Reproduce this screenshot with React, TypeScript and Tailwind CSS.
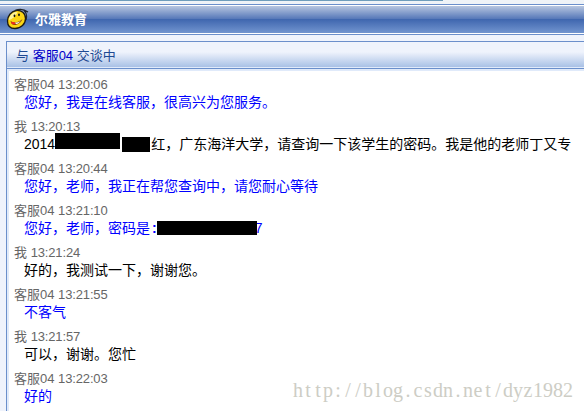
import React from "react";

interface Message {
  sender: string;
  time: string;
  mine?: boolean;
  content: React.ReactNode;
}

const messages: Message[] = [
  { sender: "客服04", time: "13:20:06", content: "您好，我是在线客服，很高兴为您服务。" },
  {
    sender: "我",
    time: "13:20:13",
    mine: true,
    content: (
      <>
        2014
        <span className="inline-block w-[65px] h-4 mt-[-2px] bg-black align-top" />
        <span className="inline-block w-7 h-[15px] mt-[2px] ml-[2px] mr-px bg-black align-top" />
        红，广东海洋大学，请查询一下该学生的密码。我是他的老师丁又专
      </>
    ),
  },
  { sender: "客服04", time: "13:20:44", content: "您好，老师，我正在帮您查询中，请您耐心等待" },
  {
    sender: "客服04",
    time: "13:21:10",
    content: (
      <>
        您好，老师，密码是<span className="ml-[2px] font-bold">:</span>
        <span className="relative inline-block w-[100px] h-[14px] mt-[2px] mr-[-2px] bg-black align-top" />
        7
      </>
    ),
  },
  { sender: "我", time: "13:21:24", mine: true, content: "好的，我测试一下，谢谢您。" },
  { sender: "客服04", time: "13:21:55", content: "不客气" },
  { sender: "我", time: "13:21:57", mine: true, content: "可以，谢谢。您忙" },
  { sender: "客服04", time: "13:22:03", content: "好的" },
];

const watermark = "http://blog.csdn.net/dyz1982";

const SmileyIcon: React.FC<{}> = () => (
  <svg width="24" height="23" viewBox="0 0 24 23" className="shrink-0">
    <path d="M10 2.500C5 3.500 1.500 8 1.500 13c0 5 3 7.500 7.500 7.500 6 0 10.500-4.500 10.500-10C19.500 5 15.500 2 10 2.500z" fill="#fcd514" stroke="#1c1a14" strokeWidth="1.300" />
    <path d="M9.500 4C5.500 5 3 8.500 2.800 12c3-.5 7-4 8.700-7.800z" fill="#fff59a" />
    <path d="M9 2.500C13 .8 18 1 22 4l-3.500-1C20.500 5 21 8.500 20 12" fill="none" stroke="#22252c" strokeWidth="1.200" />
    <ellipse cx="8.500" cy="7.800" rx=".9" ry="1.400" fill="#111" />
    <ellipse cx="13" cy="6.800" rx=".9" ry="1.400" fill="#111" />
    <path d="M4.500 13c3.500 2.500 8 1.500 12-2-1.500 3.500-4.500 6-8 6-2 0-3.500-1.500-4-4z" fill="#8a4a08" />
    <path d="M5 14.500c1.500-.8 3.500-.5 4.500 1-1.500 1.500-3.800 1-4.500-1z" fill="#f02a20" />
    <path d="M9 14.800c2.500 0 4.500-1 6-2.300-1.300 2-3 3.300-5 3.600z" fill="#fff" />
  </svg>
);

const App: React.FC<{}> = () => {
  return (
    <div className="w-[584px] h-[411px] overflow-hidden flex flex-col bg-[#eff3fc] font-['Liberation_Sans','Noto_Sans_CJK_SC',sans-serif]">
      <div className="h-1 shrink-0 bg-[#eff3f7]">
        <div className="w-[443px] h-px bg-[#6f9dbb]" />
      </div>
      <header className="h-[31px] shrink-0 border-y border-[#6b8fcb] bg-white py-px">
        <div className="h-[27px] flex items-center pl-[6px] bg-[linear-gradient(to_bottom,#b7c6e0_0,#5577b8_13px,#3e65ae_13px,#7295cf_27px)]">
          <SmileyIcon />
          <h1 className="ml-[5px] text-[13px] leading-4 font-bold text-white whitespace-nowrap">
            尔雅教育
          </h1>
        </div>
      </header>
      <main className="mt-[6px] ml-[6px] flex-1 flex flex-col border-t border-l border-[#6b8fcb] bg-[#e0eafa]">
        <div className="h-[27px] shrink-0 pl-[9px] border-b border-[#6b8fcb] bg-[linear-gradient(to_bottom,#eff3fc_10px,#a9c1e6_25px,#e0eafa_25px)] text-[13px] leading-[28px] text-[#1f4a93] whitespace-nowrap">
          与 <span className="text-[#0000c8]">客服04</span> 交谈中
        </div>
        <div className="relative mt-[2px] ml-[2px] flex-1 bg-white pl-[5px] pt-[4px]">
          {messages.map((message, index) => (
            <div key={index} className="h-[42px] whitespace-nowrap">
              <div className="h-[18px] text-[13px] leading-[20px] text-[#666]">
                {message.sender} <span className="tracking-[-0.15px]">{message.time}</span>
              </div>
              <div
                className={`h-[18px] pl-[10px] text-[14px] leading-[18px] ${
                  message.mine ? "text-black" : "text-[#0000ff]"
                }`}
              >
                {message.content}
              </div>
            </div>
          ))}
          {/* fixed-pitch serif watermark */}
          <div className="absolute right-[11px] bottom-[9px] whitespace-nowrap font-['Liberation_Serif',serif] text-[20px] leading-6 text-[#cdcdc5]">
            {watermark.split("").map((char, index) => (
              <span key={index} className="inline-block w-[10px] text-center">
                {char}
              </span>
            ))}
          </div>
        </div>
      </main>
    </div>
  );
};

export default App;
